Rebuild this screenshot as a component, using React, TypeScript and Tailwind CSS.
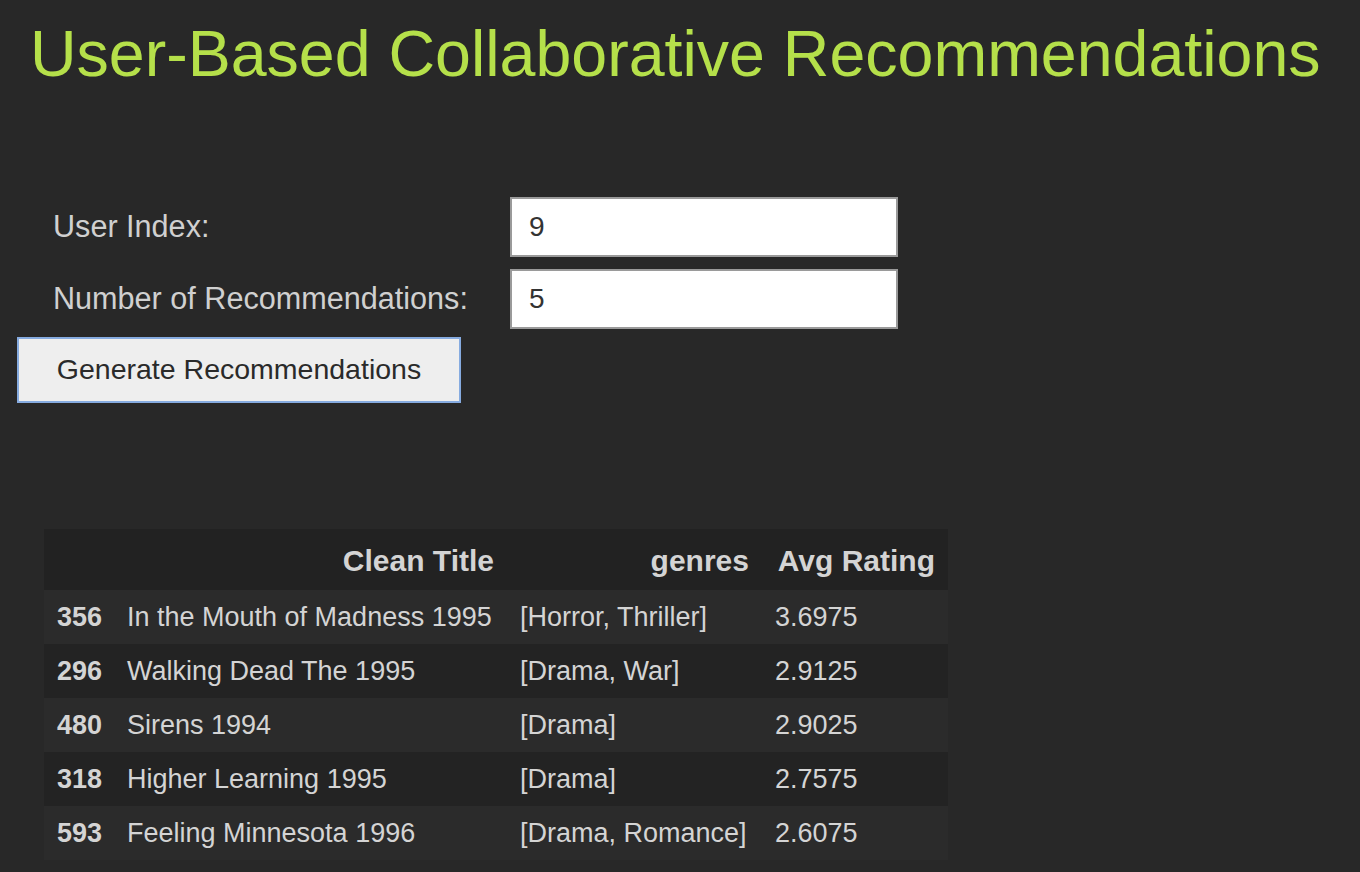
import React, { useState } from 'react';

type Rec = { id: number; title: string; genres: string; rating: string };

const recs: Rec[] = [
  { id: 356, title: 'In the Mouth of Madness 1995', genres: '[Horror, Thriller]', rating: '3.6975' },
  { id: 296, title: 'Walking Dead The 1995', genres: '[Drama, War]', rating: '2.9125' },
  { id: 480, title: 'Sirens 1994', genres: '[Drama]', rating: '2.9025' },
  { id: 318, title: 'Higher Learning 1995', genres: '[Drama]', rating: '2.7575' },
  { id: 593, title: 'Feeling Minnesota 1996', genres: '[Drama, Romance]', rating: '2.6075' },
];

export default function App() {
  const [userIndex, setUserIndex] = useState('9');
  const [count, setCount] = useState('5');

  return (
    <div
      className="min-h-[872px] w-full bg-[#282828] text-[#d4d4d4]"
      style={{ fontFamily: '"Liberation Sans", Arial, sans-serif' }}
    >
      {/* Title */}
      <h1 className="pl-[30px] pt-[22px] text-[64.5px] leading-none text-[#b5e04a]">
        User-Based Collaborative Recommendations
      </h1>

      {/* Form */}
      <div className="mt-[110px] flex flex-col pl-[17px]">
        <div className="flex items-center h-[60px]">
          <label className="w-[493px] pl-[36px] text-[30.6px] text-[#d0d0d0]">User Index:</label>
          <input
            value={userIndex}
            onChange={(e) => setUserIndex(e.target.value)}
            className="h-[60px] w-[388px] border-2 border-[#9a9a9a] bg-white px-[17px] text-[28px] text-[#333] outline-none"
          />
        </div>
        <div className="mt-[12px] flex items-center h-[60px]">
          <label className="w-[493px] pl-[36px] text-[30.6px] text-[#d0d0d0]">Number of Recommendations:</label>
          <input
            value={count}
            onChange={(e) => setCount(e.target.value)}
            className="h-[60px] w-[388px] border-2 border-[#9a9a9a] bg-white px-[17px] text-[28px] text-[#333] outline-none"
          />
        </div>
        <button className="mt-[8px] h-[66px] w-[444px] border-2 border-[#86abe0] bg-[#eeeeee] text-[28.5px] text-[#2a2a2a]">
          Generate Recommendations
        </button>
      </div>

      {/* Results */}
      <table className="ml-[44px] mt-[126px] w-[904px] table-fixed border-collapse text-[27px]">
        <colgroup>
          <col className="w-[70px]" />
          <col className="w-[393px]" />
          <col className="w-[255px]" />
          <col className="w-[186px]" />
        </colgroup>
        <thead>
          <tr className="h-[61px] bg-[#222222] text-[30px]">
            <th className="px-[13px]" />
            <th className="whitespace-nowrap px-[13px] pt-[2px] text-right font-bold">Clean Title</th>
            <th className="whitespace-nowrap px-[13px] pt-[2px] text-right font-bold">genres</th>
            <th className="whitespace-nowrap px-[13px] pt-[2px] text-right font-bold">Avg Rating</th>
          </tr>
        </thead>
        <tbody>
          {recs.map((r, i) => (
            <tr key={r.id} className={`h-[54px] ${i % 2 === 0 ? 'bg-[#2b2b2b]' : 'bg-[#232323]'}`}>
              <td className="px-[13px] pt-[2px] font-bold">{r.id}</td>
              <td className="whitespace-nowrap px-[13px] pt-[2px]">{r.title}</td>
              <td className="whitespace-nowrap px-[13px] pt-[2px]">{r.genres}</td>
              <td className="px-[13px] pt-[2px]">{r.rating}</td>
            </tr>
          ))}
        </tbody>
      </table>
    </div>
  );
}
